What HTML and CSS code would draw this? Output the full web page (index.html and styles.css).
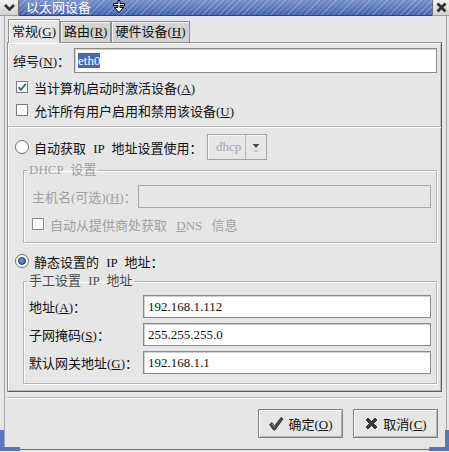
FILE: index.html
```html
<!DOCTYPE html>
<html lang="zh-CN">
<head>
<meta charset="utf-8">
<title>以太网设备</title>
<link rel="stylesheet" href="styles.css">
</head>
<body>
<div class="window">
  <div class="titlebar">
    <div class="tb-btn tb-menu">
      <svg width="11" height="7" viewBox="0 0 11 7"><polyline points="1,1 5.5,5.5 10,1" fill="none" stroke="#2e2e2e" stroke-width="2.6"/></svg>
    </div>
    <div class="title">以太网设备</div>
    <div class="tb-btn tb-close">
      <svg width="11" height="11" viewBox="0 0 11 11"><path d="M1.5 1.5 L9.5 9.5 M9.5 1.5 L1.5 9.5" stroke="#2e2e2e" stroke-width="2.8"/></svg>
    </div>
    <svg class="cursor" width="14" height="14" viewBox="0 0 14 14"><path d="M6 0.5 H8 V3.5 H12.5 V5.5 H8 V7.5 H11.5 L7 12.5 L2.5 7.5 H6 V5.5 H1.5 V3.5 H6 Z" fill="#fff" stroke="#000" stroke-width="1"/></svg>
  </div>

  <div class="client">
    <div class="tabs">
      <div class="tab active">常规(<u>G</u>)</div>
      <div class="tab">路由(<u>R</u>)</div>
      <div class="tab">硬件设备(<u>H</u>)</div>
    </div>

    <div class="panel">
      <div class="nick-row">
        <span class="nick-label">绰号(<u>N</u>)：</span>
        <div class="entry nick-entry"><span class="selected">eth0</span></div>
      </div>

      <div class="check-row first">
        <span class="check">
          <svg width="10" height="10" viewBox="0 0 10 10"><path d="M1.5 5.2 L4 7.8 L8.8 1.8" fill="none" stroke="#3459a8" stroke-width="1.8"/></svg>
        </span>
        <span>当计算机启动时激活设备(<u>A</u>)</span>
      </div>
      <div class="check-row">
        <span class="check"></span>
        <span>允许所有用户启用和禁用该设备(<u>U</u>)</span>
      </div>

      <div class="hsep"></div>

      <div class="radio-row dhcp-row">
        <span class="radio"></span>
        <span class="radio-label spaced">自动获取 IP 地址设置使用：</span>
        <div class="combo">
          <span class="combo-text">dhcp</span>
          <span class="combo-arrow">
            <svg width="8" height="9" viewBox="0 0 8 9"><path d="M0.5 1 H7.5 L4 5 Z" fill="#4a4a4a"/><path d="M2 8 H6" stroke="#a8a8a8" stroke-width="1"/></svg>
          </span>
        </div>
      </div>

      <fieldset class="group dhcp-group">
        <legend class="disabled spaced">DHCP 设置</legend>
        <div class="group-body dhcp-body">
          <div class="field-row host-row">
            <span class="field-label host-label disabled">主机名(可选)(<u>H</u>)：</span>
            <div class="entry disabled-entry"></div>
          </div>
          <div class="check-row dns-row disabled">
            <span class="check dim"></span>
            <span class="spaced-wide">自动从提供商处获取 <u>D</u>NS 信息</span>
          </div>
        </div>
      </fieldset>

      <div class="radio-row static-row">
        <span class="radio checked"><span class="dot"></span></span>
        <span class="spaced">静态设置的 IP 地址：</span>
      </div>

      <fieldset class="group manual-group">
        <legend class="spaced frame-title">手工设置 IP 地址</legend>
        <div class="group-body manual-body">
          <div class="field-row">
            <span class="field-label">地址(<u>A</u>)：</span>
            <div class="entry">192.168.1.112</div>
          </div>
          <div class="field-row">
            <span class="field-label">子网掩码(<u>S</u>)：</span>
            <div class="entry">255.255.255.0</div>
          </div>
          <div class="field-row">
            <span class="field-label">默认网关地址(<u>G</u>)：</span>
            <div class="entry">192.168.1.1</div>
          </div>
        </div>
      </fieldset>
    </div>

    <div class="bottom-sep"></div>

    <div class="buttons">
      <div class="btn">
        <svg width="16" height="16" viewBox="0 0 16 16"><path d="M1.5 8.5 L4 6.5 L6.5 10 L13 1.5 L15 3 L7 14 L5.5 14 Z" fill="#4a4a4a" stroke="#2a2a2a" stroke-width="0.8" stroke-linejoin="round"/><path d="M4.2 7.8 L6.6 11" stroke="#9a9a9a" stroke-width="1"/></svg>
        <span>确定(<u>O</u>)</span>
      </div>
      <div class="btn">
        <svg width="15" height="15" viewBox="0 0 15 15"><path d="M2 4 L4 2 L7.5 5.5 L11 2 L13 4 L9.5 7.5 L13 11 L11 13 L7.5 9.5 L4 13 L2 11 L5.5 7.5 Z" fill="#3c3c3c" stroke="#222" stroke-width="0.8" stroke-linejoin="round"/></svg>
        <span>取消(<u>C</u>)</span>
      </div>
    </div>
  </div>

  <div class="grip grip-left"></div>
  <div class="grip grip-right"></div>
</div>
</body>
</html>
```

FILE: styles.css
```css
* { box-sizing: border-box; }

html, body {
  margin: 0;
  padding: 0;
}

body {
  width: 449px;
  height: 452px;
  overflow: hidden;
  background: #e6e6e6;
  font-family: "Liberation Serif", "Noto Sans CJK SC", serif;
  font-size: 13px;
  color: #111;
}

u { text-decoration-thickness: 1px; text-underline-offset: 1px; }

.spaced { word-spacing: 4px; }
.spaced-wide { word-spacing: 6px; }

.window {
  position: relative;
  width: 449px;
  height: 452px;
  background: #e6e6e6;
  display: flex;
  flex-direction: column;
}

/* title bar */
.titlebar {
  position: relative;
  height: 16px;
  display: flex;
  flex: none;
}

.tb-btn {
  height: 16px;
  display: flex;
  align-items: center;
  justify-content: center;
  background: linear-gradient(#f2f2f2, #d2d2d2);
  border-bottom: 1px solid #9a9a9a;
}

.tb-menu { width: 19px; border-right: 1px solid #6f6f6f; }
.tb-close { width: 17px; border-left: 1px solid #6f6f6f; }

.title {
  flex: 1;
  padding-left: 7px;
  line-height: 15px;
  color: #fff;
  font-size: 13px;
  background:
    repeating-linear-gradient(135deg, rgba(255,255,255,0.22) 0 1px, rgba(255,255,255,0) 1px 4px),
    linear-gradient(#7790cc, #4764ad);
  border-bottom: 1px solid #2c437f;
}

.cursor {
  position: absolute;
  left: 112px;
  top: 0;
}

/* client area */
.client {
  flex: 1;
  display: flex;
  flex-direction: column;
  margin: 0 2px 2px 4px;
  padding: 3px 0 0 2px;
  border-left: 1px solid #a5a5a5;
  border-right: 1px solid #a5a5a5;
  border-bottom: 1px solid #6e6e6e;
}

/* tabs */
.tabs {
  display: flex;
  align-items: flex-end;
  height: 23px;
  margin-left: 1px;
}

.tab {
  height: 21px;
  padding: 0 3px;
  line-height: 20px;
  background: #d3d3d3;
  border: 1px solid #8e8e8e;
  border-bottom: none;
  box-shadow: inset 1px 1px 0 #f4f4f4;
  white-space: nowrap;
}

.tab.active {
  position: relative;
  z-index: 1;
  height: 24px;
  margin-bottom: -1px;
  line-height: 23px;
  background: #e6e6e6;
  box-shadow: inset 1px 1px 0 #ffffff;
}

/* notebook page */
.panel {
  margin-right: 4px;
  padding: 5px 4px 7px 5px;
  border: 1px solid #8e8e8e;
  border-right-color: #5e5e5e;
  border-bottom-color: #5e5e5e;
  box-shadow: inset 1px 1px 0 #ffffff, inset -1px -1px 0 #b9b9b9;
}

.nick-row {
  display: flex;
  align-items: center;
  height: 25px;
}

.nick-label { width: 61px; white-space: nowrap; }

.entry {
  flex: 1;
  height: 100%;
  display: flex;
  align-items: center;
  padding-left: 4px;
  background: #fff;
  border: 1px solid #8a8a8a;
  box-shadow: inset 1px 1px 0 #d0d0d0;
  white-space: nowrap;
}

.nick-entry { padding-left: 3px; }

.selected {
  background: #4868b4;
  color: #fff;
  line-height: 15px;
}

.check-row {
  display: flex;
  align-items: center;
  height: 20px;
  margin-top: 3px;
  white-space: nowrap;
}

.check-row.first { margin-top: 4px; }

.check {
  flex: none;
  width: 12px;
  height: 12px;
  margin: 0 6px 0 3px;
  display: flex;
  align-items: center;
  justify-content: center;
  background: #fff;
  border: 1px solid #7c7c7c;
}

.check.dim { border-color: #8c8c8c; margin-left: 0; }

.hsep {
  height: 2px;
  margin: 6px -4px 0 -5px;
  border-top: 1px solid #b6b6b6;
  border-bottom: 1px solid #ffffff;
}

.radio-row {
  display: flex;
  align-items: center;
  white-space: nowrap;
}

.dhcp-row { height: 26px; margin-top: 6px; }
.static-row { height: 20px; margin-top: 8px; }

.radio {
  flex: none;
  width: 14px;
  height: 14px;
  margin: 0 5px 0 2px;
  border-radius: 50%;
  background: #fff;
  border: 1px solid #6f6f6f;
  display: flex;
  align-items: center;
  justify-content: center;
}

.radio .dot {
  width: 8px;
  height: 8px;
  border-radius: 50%;
  background: radial-gradient(circle at 40% 35%, #7d9ad8, #2f4f9a);
  border: 1px solid #1f3570;
}

.radio-label { width: 173px; }

.combo {
  width: 60px;
  height: 26px;
  display: flex;
  border: 1px solid #a2a2a2;
  box-shadow: inset 1px 1px 0 #f6f6f6;
}

.combo-text {
  flex: 1;
  padding-left: 8px;
  line-height: 24px;
  color: #a3a3a3;
}

.combo-arrow {
  width: 21px;
  display: flex;
  align-items: center;
  justify-content: center;
  border-left: 1px solid #b8b8b8;
}

/* frames */
.group {
  margin: 2px 0 0 10px;
  padding: 0;
  min-width: 0;
  border: 1px solid #b4b4b4;
  box-shadow: 1px 1px 0 #ffffff, inset 1px 1px 0 #ffffff;
}

.group legend {
  margin-left: 4px;
  padding: 0 1px;
  line-height: 16px;
}

.frame-title { color: #4a4a4a; }

.group-body { display: flex; flex-direction: column; }

.dhcp-body { padding: 7px 5px 8px 8px; }
.manual-body { padding: 6px 5px 9px 5px; gap: 5px; }

.field-row {
  display: flex;
  align-items: center;
  height: 23px;
  white-space: nowrap;
}

.field-label { width: 114px; }
.host-label { width: 106px; }

.dns-row { margin-top: 6px; }

.disabled { color: #a0a0a0; }

.disabled-entry {
  background: #e6e6e6;
  border-color: #a6a6a6;
  box-shadow: none;
}

/* bottom */
.bottom-sep {
  height: 2px;
  margin: 5px 4px 0 0;
  border-top: 1px solid #b6b6b6;
  border-bottom: 1px solid #ffffff;
}

.buttons {
  display: flex;
  justify-content: flex-end;
  gap: 10px;
  margin: 10px 8px 0 0;
}

.btn {
  width: 85px;
  height: 29px;
  display: flex;
  align-items: center;
  justify-content: center;
  gap: 4px;
  background: #e6e6e6;
  border: 1px solid #7d7d7d;
  box-shadow: inset 1px 1px 0 #ffffff, inset -1px -1px 0 #b3b3b3;
  white-space: nowrap;
}

/* resize grips */
.grip {
  position: absolute;
  bottom: 1px;
  width: 20px;
  height: 21px;
  border-bottom: 4px solid #5a76ba;
}

.grip-left {
  left: 0;
  border-left: 4px solid #5a76ba;
}

.grip-right {
  right: 0;
  border-right: 4px solid #5a76ba;
}
```
